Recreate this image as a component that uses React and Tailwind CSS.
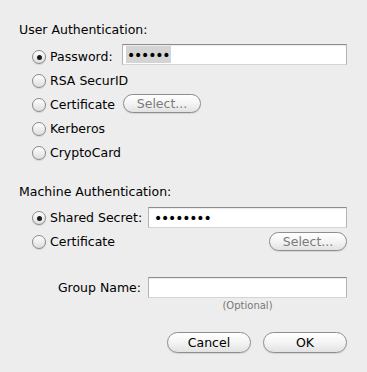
function Radio({ checked }) {
  return (
    <span className="relative flex h-[14px] w-[14px] shrink-0 items-center justify-center rounded-full border border-[#8a8a8a] bg-gradient-to-b from-white to-[#dedede] shadow-[0_1px_1px_rgba(0,0,0,0.12)]">
      {checked && <span className="h-[5px] w-[5px] rounded-full bg-[#1a1a1a]" />}
    </span>
  )
}

function Field({ className = '', children }) {
  return (
    <div
      className={`flex h-[21px] items-center border border-[#b4b4b4] border-t-[#8c8c8c] border-b-[#d4d4d4] bg-white shadow-[inset_0_1px_1px_rgba(0,0,0,0.08)] ${className}`}
    >
      {children}
    </div>
  )
}

function Pill({ children, disabled, className = '' }) {
  return (
    <button
      className={`flex items-center justify-center rounded-full border border-[#8e8e8e] bg-gradient-to-b from-white via-[#f4f4f4] to-[#e2e2e2] shadow-[0_1px_1px_rgba(0,0,0,0.1)] ${
        disabled ? 'text-[#7a7a7a]' : 'text-black'
      } ${className}`}
    >
      {children}
    </button>
  )
}

function Choice({ checked, label, children, labelWidth }) {
  return (
    <div className="flex h-6 items-center">
      <Radio checked={checked} />
      <span className={`ml-[4px] shrink-0 ${labelWidth || ''}`}>{label}</span>
      {children}
    </div>
  )
}

export default function App() {
  return (
    <div
      className="flex h-[372px] w-[367px] flex-col bg-[#ededed] pl-[19px] pr-[20px] text-[12.5px] leading-4 text-black"
      style={{ fontFamily: '"DejaVu Sans", "Noto Sans", sans-serif' }}
    >
      <p className="mt-[22px]">User Authentication:</p>

      <div className="mt-[7px] flex flex-col pl-[13px]">
        <Choice checked label="Password:" labelWidth="w-[72px]">
          <Field className="-mt-px flex-1 self-start pl-[3px]">
            <span className="flex h-[17px] items-center bg-[#d4d4d4] pl-[1px] pr-[2px] text-[14px] tracking-[-1.2px]">
              ••••••
            </span>
          </Field>
        </Choice>
        <Choice label="RSA SecurID" />
        <Choice label="Certificate" labelWidth="w-[73px]">
          <Pill disabled className="mt-px h-[19px] w-[78px] self-start">
            Select...
          </Pill>
        </Choice>
        <Choice label="Kerberos" />
        <Choice label="CryptoCard" />
      </div>

      <p className="mt-[19px]">Machine Authentication:</p>

      <div className="mt-[6px] flex flex-col pl-[13px]">
        <Choice checked label="Shared Secret:" labelWidth="w-[98px]">
          <Field className="mt-px flex-1 self-start pl-[5px]">
            <span className="text-[14px] tracking-[-1.2px]">••••••••</span>
          </Field>
        </Choice>
        <div className="flex h-6 items-center">
          <Radio />
          <span className="ml-[4px]">Certificate</span>
          <Pill disabled className="ml-auto mt-[2px] h-[19px] w-[78px] self-start">
            Select...
          </Pill>
        </div>
      </div>

      <div className="mt-[22px] flex h-6 items-center">
        <span className="w-[123px] pr-[1px] text-right">Group Name:</span>
        <Field className="ml-[6px] mt-px flex-1 self-start" />
      </div>
      <div className="flex">
        <span className="ml-[129px] flex-1 text-center text-[10px] leading-3 text-[#777]">(Optional)</span>
      </div>

      <div className="mt-[20px] flex justify-end gap-[12px]">
        <Pill className="h-[21px] w-[84px]">Cancel</Pill>
        <Pill className="h-[21px] w-[84px]">OK</Pill>
      </div>
    </div>
  )
}
